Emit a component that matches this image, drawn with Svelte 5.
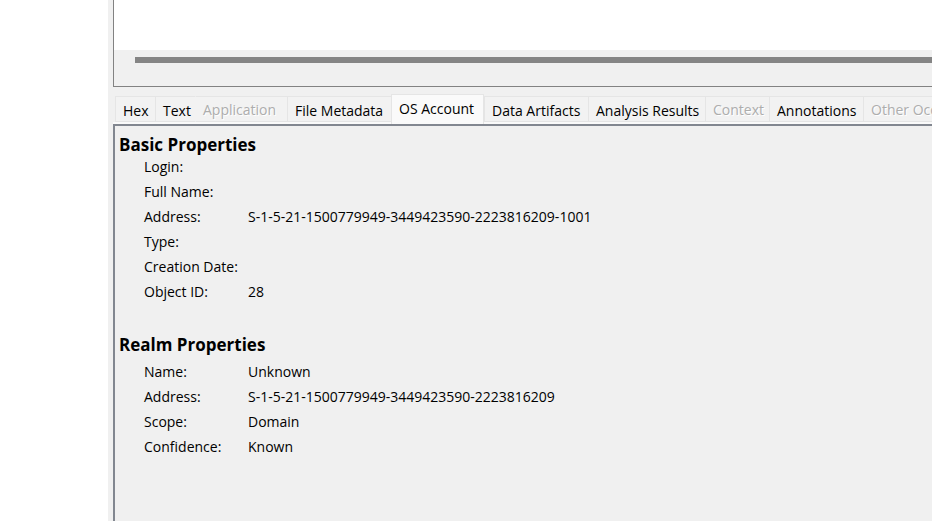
<script>
  const tabs = [
    { label: 'Hex', width: 40 },
    { label: 'Text', width: 40 },
    { label: 'Application', width: 92, disabled: true, joined: true },
    { label: 'File Metadata', width: 104 },
    { label: 'OS Account', width: 93 },
    { label: 'Data Artifacts', width: 104 },
    { label: 'Analysis Results', width: 117 },
    { label: 'Context', width: 64, disabled: true },
    { label: 'Annotations', width: 94 },
    { label: 'Other Occurrences', width: 140, disabled: true }
  ];
  let active = $state('OS Account');

  const basic = [
    ['Login:', ''],
    ['Full Name:', ''],
    ['Address:', 'S-1-5-21-1500779949-3449423590-2223816209-1001'],
    ['Type:', ''],
    ['Creation Date:', ''],
    ['Object ID:', '28']
  ];
  const realm = [
    ['Name:', 'Unknown'],
    ['Address:', 'S-1-5-21-1500779949-3449423590-2223816209'],
    ['Scope:', 'Domain'],
    ['Confidence:', 'Known']
  ];
</script>

{#snippet properties(rows)}
  <dl>
    {#each rows as [name, value]}
      <div class="row">
        <dt>{name}</dt>
        <dd>{value}</dd>
      </div>
    {/each}
  </dl>
{/snippet}

<div class="window">
  <main>
    <section class="results" aria-label="Results">
      <div class="listing"></div>
      <div class="scroll"><div class="thumb"></div></div>
    </section>

    <div class="tabs" role="tablist">
      {#each tabs as tab}
        <button
          role="tab"
          class:active={active === tab.label}
          class:joined={tab.joined}
          style:min-width="{tab.width}px"
          aria-selected={active === tab.label}
          disabled={tab.disabled}
          onclick={() => (active = tab.label)}>{tab.label}</button>
      {/each}
    </div>

    <section class="panel" aria-label="OS Account">
      <h2>Basic Properties</h2>
      {@render properties(basic)}
      <h2 class="realm">Realm Properties</h2>
      {@render properties(realm)}
    </section>
  </main>
</div>

<style>
  .window {
    box-sizing: border-box;
    height: 100vh;
    padding-left: 108px;
    overflow: hidden;
    background: #fff;
    color: #000;
    font: 14px/25px 'Open Sans', 'Noto Sans', sans-serif;
  }
  main {
    display: flex;
    flex-direction: column;
    box-sizing: border-box;
    height: 100%;
    padding-left: 5px;
    background: #f0f0f0;
  }
  .results {
    flex: none;
    border-left: 1px solid #828282;
    border-bottom: 1px solid #828282;
  }
  .listing {
    height: 50px;
    background: #fff;
  }
  .scroll {
    padding: 7px 0 23px 21px;
  }
  .thumb {
    height: 6px;
    background: #858585;
  }
  .tabs {
    display: flex;
    align-items: flex-end;
    flex: none;
    height: 37px;
    padding-left: 2px;
    overflow: hidden;
    background: linear-gradient(#fafafa, #fafafa) bottom / 100% 2px no-repeat;
  }
  button {
    flex: none;
    box-sizing: border-box;
    height: 26px;
    margin: 0 0 2px;
    padding: 4px 3px 0 7px;
    border: solid #e5e5e5;
    border-width: 1px 0 1px 1px;
    background: #f2f2f2;
    color: #000;
    font: inherit;
    line-height: 20px;
    text-align: left;
    white-space: nowrap;
  }
  button:disabled {
    padding-top: 1px;
    color: #adadad;
    text-shadow: 1px 1px #fff;
  }
  button.joined {
    border-left-color: transparent;
  }
  button.active {
    height: 30px;
    margin: 0;
    padding-top: 0;
    padding-bottom: 2px;
    border-width: 1px 1px 0;
    background: #fafafa;
  }
  .panel {
    flex: 1;
    min-height: 0;
    padding: 9px 4px 0;
    border-top: 2px solid #828790;
    border-left: 2px solid #828790;
  }
  h2 {
    margin: 0;
    font-size: 17px;
    line-height: 19px;
    font-weight: 700;
  }
  .realm {
    margin: 31px 0 5px;
  }
  dl {
    margin: 0 0 0 25px;
  }
  .row {
    display: grid;
    grid-template-columns: 104px 1fr;
    height: 25px;
  }
  dd {
    margin: 0;
    white-space: nowrap;
  }
</style>
